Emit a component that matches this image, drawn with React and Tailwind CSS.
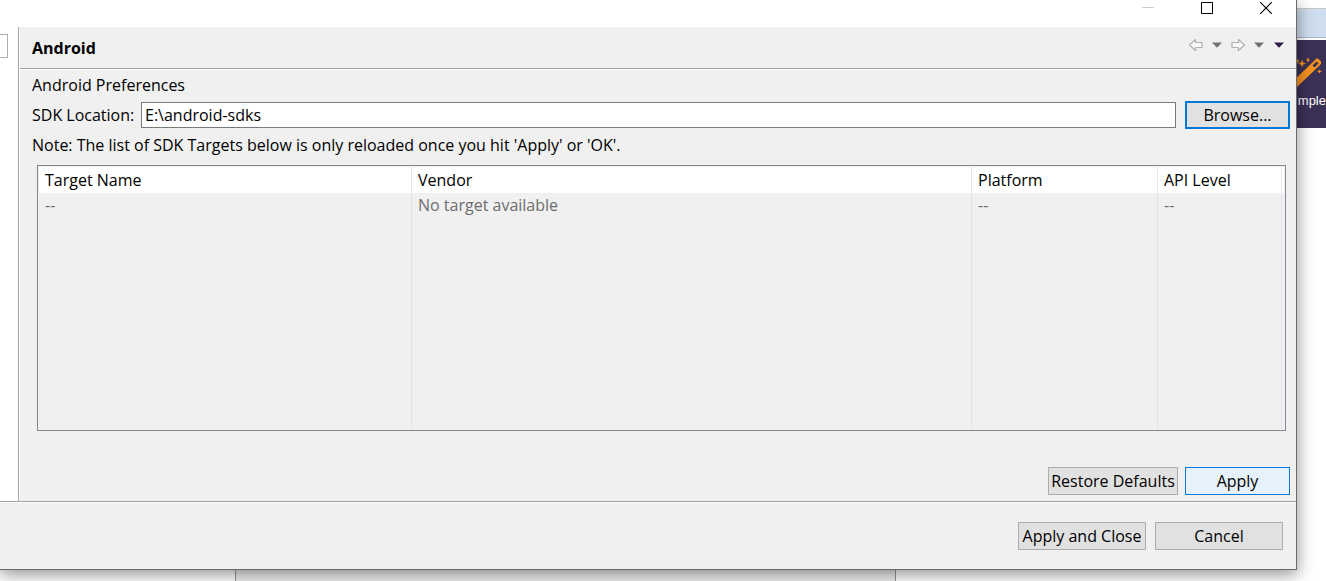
import React from "react";

const buttonBase =
  "h-7 border text-center leading-5 whitespace-nowrap text-black";

function NavArrow({ flip }) {
  return (
    <svg width="16" height="14" viewBox="0 0 16 14" className={flip ? "-scale-x-100" : ""}>
      <path
        d="M1.5 7 L7.5 1.5 V4.5 H14 V9.5 H7.5 V12.5 Z"
        fill="#f8f8f8"
        stroke="#b0b0b0"
        strokeWidth="1.2"
        strokeLinejoin="round"
      />
    </svg>
  );
}

function Caret({ color }) {
  return (
    <svg width="10" height="6" viewBox="0 0 10 6">
      <path d="M0 0.5 H10 L5 5.7 Z" fill={color} />
    </svg>
  );
}

function TitleBar() {
  return (
    <div className="flex h-[27px] shrink-0 items-start justify-end bg-white">
      <div className="flex gap-[47px] pr-6 pt-px">
        <button aria-label="Minimize" className="h-[14px] w-3">
          <svg width="12" height="14" viewBox="0 0 12 14">
            <path d="M0 6.5 H12" stroke="#cccccc" />
          </svg>
        </button>
        <button aria-label="Maximize" className="h-[14px] w-3">
          <svg width="12" height="14" viewBox="0 0 12 14" fill="none">
            <path d="M0.5 1.5 H11.5 V12.5 H0.5 Z" stroke="#000" />
          </svg>
        </button>
        <button aria-label="Close" className="h-[14px] w-3">
          <svg width="12" height="14" viewBox="0 0 12 14">
            <path d="M0.2 1.2 L11.8 12.8 M11.8 1.2 L0.2 12.8" stroke="#000" strokeWidth="1.1" />
          </svg>
        </button>
      </div>
    </div>
  );
}

function PageHeader() {
  return (
    <header className="flex h-[42px] items-start justify-between border-b border-[#a0a0a0] pl-3 pr-3">
      <h1 className="pt-[11px] text-base leading-5 font-bold">Android</h1>
      <div className="flex h-9 items-center gap-2">
        <button aria-label="Back"><NavArrow /></button>
        <button aria-label="Back history"><Caret color="#707274" /></button>
        <button aria-label="Forward"><NavArrow flip /></button>
        <button aria-label="Forward history"><Caret color="#707274" /></button>
        <button aria-label="View menu" className="ml-0.5"><Caret color="#2c1a48" /></button>
      </div>
    </header>
  );
}

function TargetTable() {
  const head = "border-r border-[#e5e5e5] bg-white pl-[6px] text-left font-normal";
  const cell = "border-r border-[#dfe5ec] pl-[6px] text-[#6d6d6d]";
  return (
    <div className="ml-[17px] mr-[10px] flex flex-1 flex-col border border-[#828790] p-px">
      <table className="w-full flex-1 table-fixed border-separate border-spacing-0 leading-5">
        <colgroup>
          <col className="w-[373px]" />
          <col />
          <col className="w-[186px]" />
          <col className="w-[124px]" />
          <col className="w-[2px]" />
        </colgroup>
        <thead>
          <tr className="h-[26px]">
            <th className={head}>Target Name</th>
            <th className={head}>Vendor</th>
            <th className={head}>Platform</th>
            <th className={head}>API Level</th>
            <td className="bg-white p-0" />
          </tr>
        </thead>
        <tbody>
          <tr className="h-6">
            <td className={cell}>--</td>
            <td className={cell}>No target available</td>
            <td className={cell}>--</td>
            <td className={cell}>--</td>
            <td className="p-0" />
          </tr>
          <tr className="h-[212px]">
            <td className={cell} />
            <td className={cell} />
            <td className={cell} />
            <td className={cell} />
            <td className="p-0" />
          </tr>
        </tbody>
      </table>
    </div>
  );
}

function PreferencePage() {
  return (
    <main className="flex min-w-0 flex-1 flex-col border-l border-white">
      <PageHeader />
      <div className="flex flex-1 flex-col border-t border-white pb-1.5">
        <p className="px-3 pt-[5px] leading-5">Android Preferences</p>
        <div className="mt-1.5 flex items-center pl-3 pr-1.5">
          <label htmlFor="sdk" className="w-[109px] shrink-0 leading-5 whitespace-nowrap">
            SDK Location:
          </label>
          <input
            id="sdk"
            type="text"
            defaultValue="E:\android-sdks"
            className="h-[26px] min-w-0 flex-1 border border-[#7a7a7a] bg-white px-[3px] leading-5 outline-none"
          />
          <button className={buttonBase + " ml-[9px] w-[105px] border-2 border-[#0078d7] bg-[#e1e1e1]"}>
            Browse...
          </button>
        </div>
        <p className="mt-1.5 mb-[10px] px-3 leading-5">
          Note: The list of SDK Targets below is only reloaded once you hit 'Apply' or 'OK'.
        </p>
        <TargetTable />
        <div className="mt-9 flex justify-end gap-[7px] pr-1.5">
          <button className={buttonBase + " w-[130px] border-[#adadad] bg-[#e1e1e1]"}>
            Restore Defaults
          </button>
          <button className={buttonBase + " w-[105px] border-[#0078d7] bg-[#e5f1fb]"}>Apply</button>
        </div>
      </div>
    </main>
  );
}

function BackgroundWindow() {
  return (
    <aside className="flex w-[29px] shrink-0 flex-col overflow-hidden bg-white">
      <div className="h-[9px] border-b border-[#c8c8c8]" />
      <div className="h-[29px] border-b border-[#a9b5c4] bg-[#cfdeee]" />
      <div className="mt-0.5 flex h-[88px] flex-col bg-[#3b3157] pt-[17px]">
        <svg width="29" height="34" viewBox="0 0 29 34">
          <path d="M-6 26 L18 3 Q20 0.5 22 2.5 L23.5 4 Q25 6 23 8 L-2 32 Z" fill="#f7931e" />
          <path d="M15.5 8.5 L19.5 4.5 L21.5 6.5 L17.5 10.5 Z" fill="#3b3157" />
          <path d="M5 2 L6.3 5.2 L9.5 6.5 L6.3 7.8 L5 11 L3.7 7.8 L0.5 6.5 L3.7 5.2 Z" fill="#f7931e" stroke="#3b3157" strokeWidth="0.5" />
          <path d="M11 0.5 L11.8 2.2 L13 3 L11.8 3.8 L11 5.5 L10.2 3.8 L9 3 L10.2 2.2 Z" fill="#f7931e" />
          <path d="M0.5 2 L1.2 3.3 L2.5 4 L1.2 4.7 L0.5 6 L-1 4 Z" fill="#f7931e" />
          <path d="M22.5 12.5 L23.3 13.7 L25 14.5 L23.3 15.3 L22.5 16.5 L21.7 15.3 L20 14.5 L21.7 13.7 Z" fill="#f7931e" />
        </svg>
        <span className="self-end font-['Liberation_Sans',sans-serif] text-[13px] leading-5 text-white">
          mple
        </span>
      </div>
    </aside>
  );
}

export default function App() {
  return (
    <div className="flex min-h-screen flex-col overflow-hidden bg-white font-['Open_Sans',sans-serif] text-base text-black">
      <div className="flex flex-1">
        <section className="relative z-10 flex min-w-0 flex-1 flex-col border-r border-b border-[#6b6b6b] bg-[#f0f0f0] shadow-[0_4px_16px_rgba(0,0,0,0.45)]">
          <TitleBar />
          <div className="flex flex-1">
            <div className="w-[19px] shrink-0 border-r border-[#a0a0a0] bg-white pt-[7px]">
              <input
                aria-label="Filter"
                className="block h-6 w-2 border border-l-0 border-[#adadad] bg-white"
              />
            </div>
            <PreferencePage />
          </div>
          <footer className="flex justify-end gap-[9px] border-t border-[#a0a0a0] pr-[13px] pb-[19px] pt-5 shadow-[inset_0_1px_0_#fff]">
            <button className={buttonBase + " w-32 border-[#adadad] bg-[#e1e1e1]"}>
              Apply and Close
            </button>
            <button className={buttonBase + " w-32 border-[#adadad] bg-[#e1e1e1]"}>Cancel</button>
          </footer>
        </section>
        <BackgroundWindow />
      </div>
      <div className="flex h-[11px] shrink-0">
        <div className="w-[235px] bg-white" />
        <div className="w-[661px] border-x border-[#999] bg-[#f0f0f0]" />
        <div className="flex-1 bg-white" />
      </div>
    </div>
  );
}
